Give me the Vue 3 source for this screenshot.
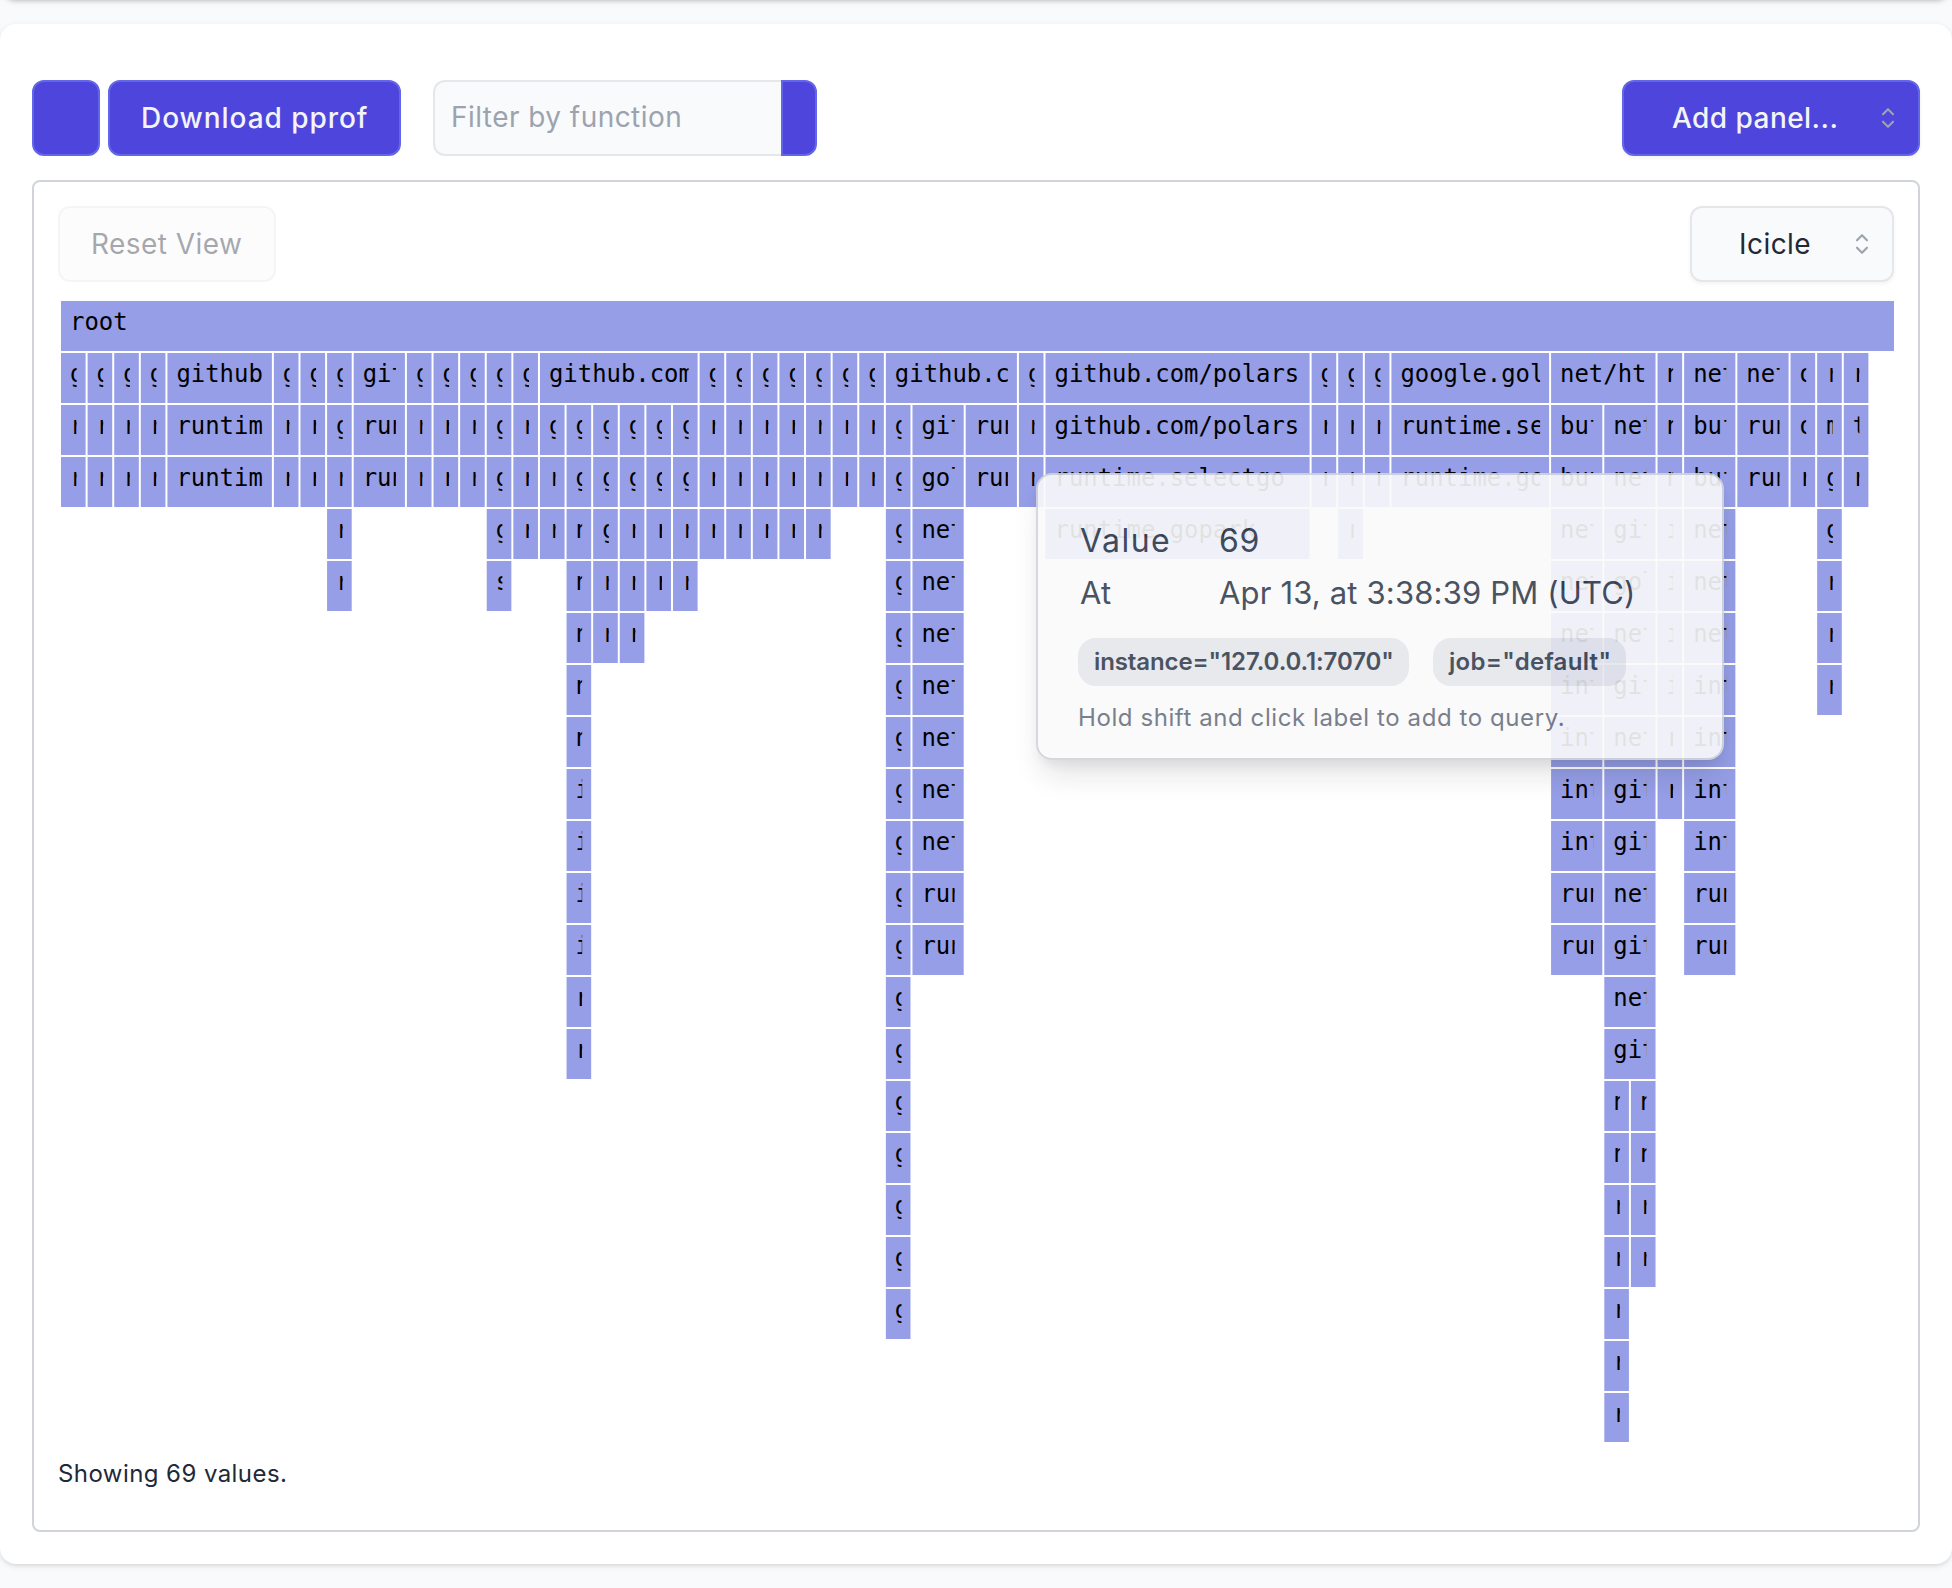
<script setup>
const TOTAL = 69
const WIDTH = 1836
const ROW = 52
const UNIT = WIDTH / TOTAL

// Stacks of the profile: [depth, first sample, samples, frames from top to bottom]
const stacks = [
  [0, 0, 69, 'root'],
  [1, 0, 1, 'g r r'],
  [1, 1, 1, 'g r r'],
  [1, 2, 1, 'g r r'],
  [1, 3, 1, 'g r r'],
  [1, 4, 4, 'github runtim runtim'],
  [1, 8, 1, 'g r r'],
  [1, 9, 1, 'g r r'],
  [1, 10, 1, 'g g r r r'],
  [1, 11, 2, 'git run run'],
  [1, 13, 1, 'g r r'],
  [1, 14, 1, 'g r r'],
  [1, 15, 1, 'g r r'],
  [1, 16, 1, 'g g g g s'],
  [1, 17, 1, 'g r r r'],
  [1, 18, 6, 'github.com'],
  [2, 18, 1, 'g r r'],
  [2, 19, 1, 'g g n n n n n i i i i r r'],
  [2, 20, 1, 'g g g r r'],
  [2, 21, 1, 'g g r r r'],
  [2, 22, 1, 'g g r r'],
  [2, 23, 1, 'g g r r'],
  [1, 24, 1, 'g r r r'],
  [1, 25, 1, 'g r r r'],
  [1, 26, 1, 'g r r r'],
  [1, 27, 1, 'g r r r'],
  [1, 28, 1, 'g r r r'],
  [1, 29, 1, 'g r r'],
  [1, 30, 1, 'g r r'],
  [1, 31, 5, 'github.c'],
  [2, 31, 1, 'g g g g g g g g g g g g g g g g g g'],
  [2, 32, 2, 'git gol net net net net net net net run run'],
  [2, 34, 2, 'run run'],
  [1, 36, 1, 'g r r'],
  [1, 37, 10, 'github.com/polars github.com/polars runtime.selectgo runtime.gopark'],
  [1, 47, 1, 'g r r'],
  [1, 48, 1, 'g r r r'],
  [1, 49, 1, 'g r r'],
  [1, 50, 6, 'google.gol runtime.se runtime.go'],
  [1, 56, 4, 'net/ht'],
  [2, 56, 2, 'buf buf net net net int int int int run run'],
  [2, 58, 2, 'net net git gol net git net git git net git net git'],
  [15, 58, 1, 'n n r r r r r'],
  [15, 59, 1, 'n n r r'],
  [1, 60, 1, 'n n n i i i i r r'],
  [1, 61, 2, 'net buf buf net net net int int int int run run'],
  [1, 63, 2, 'net run run'],
  [1, 65, 1, 'o o r'],
  [1, 66, 1, 'r m g g r r r'],
  [1, 67, 1, 'r t r'],
]

const frames = stacks.flatMap(([depth, start, span, names]) =>
  names.split(' ').map((name, i) => ({
    name,
    x: start * UNIT,
    y: (depth + i) * ROW,
    w: span * UNIT,
  })),
)
</script>

<template>
  <div class="page">
    <div class="query-bar"></div>
    <main class="card">
      <header class="toolbar">
        <button class="btn primary square" aria-label="Share"></button>
        <button class="btn primary download"><span>Download pprof</span></button>
        <div class="filter">
          <input type="text" placeholder="Filter by function" />
          <button class="btn primary search" aria-label="Search"></button>
        </div>
        <button class="btn primary select add">
          <span>Add panel...</span>
          <svg class="selector" viewBox="0 0 24 24"><path d="M8 9l4-4 4 4m0 6l-4 4-4-4" /></svg>
        </button>
      </header>

      <section class="panel">
        <div class="panel-bar">
          <button class="btn neutral reset" disabled><span>Reset View</span></button>
          <button class="btn neutral select kind">
            <span>Icicle</span>
            <svg class="selector" viewBox="0 0 24 24"><path d="M8 9l4-4 4 4m0 6l-4 4-4-4" /></svg>
          </button>
        </div>

        <svg class="icicle" :width="WIDTH - 2" :height="22 * ROW - 2">
          <g v-for="(f, i) in frames" :key="i">
            <rect :x="f.x + 1" :y="f.y + 1" :width="f.w - 2" :height="ROW - 2" />
            <svg :x="f.x + 10" :y="f.y" :width="f.w - 20" :height="ROW">
              <text x="0" y="30">{{ f.name }}</text>
            </svg>
          </g>
        </svg>

        <p class="summary">Showing 69 values.</p>
      </section>
    </main>

    <aside class="tooltip">
      <dl>
        <dt class="t-value">Value</dt>
        <dd class="t-count">69</dd>
        <dt>At</dt>
        <dd>Apr 13, at 3:38:39 PM (UTC)</dd>
      </dl>
      <div class="labels">
        <span class="label instance">instance="127.0.0.1:7070"</span>
        <span class="label job">job="default"</span>
      </div>
      <p class="hint">Hold shift and click label to add to query.</p>
    </aside>
  </div>
</template>

<style>
body {
  margin: 0;
  background: #f9fafb;
}
</style>

<style scoped>
* {
  box-sizing: border-box;
}
.page {
  position: relative;
  height: 1588px;
  overflow: hidden;
  background: #f9fafc;
  font-family: Inter, 'Open Sans', sans-serif;
  color: #1f2937;
}
.query-bar {
  height: 40px;
  margin-top: -40px;
  border-radius: 16px;
  background: #fff;
  box-shadow: 0 2px 6px rgba(0, 0, 0, 0.1), 0 2px 4px -2px rgba(0, 0, 0, 0.2);
}
.card {
  height: 1540px;
  margin-top: 24px;
  padding: 56px 32px 32px;
  border-radius: 16px;
  background: #fff;
  box-shadow: 0 2px 6px rgba(0, 0, 0, 0.1), 0 2px 4px -2px rgba(0, 0, 0, 0.1);
}
.toolbar {
  display: flex;
  height: 76px;
}
.btn {
  display: flex;
  align-items: center;
  height: 76px;
  padding: 0 0 1px;
  border: 2px solid;
  border-radius: 12px;
  font-family: inherit;
  font-size: 28px;
  letter-spacing: 0.45px;
  line-height: 40px;
  white-space: nowrap;
}
.primary {
  border-color: #6466ea;
  background: #4e45dc;
  color: #f3f4f6;
  font-weight: 500;
}
.neutral {
  border-color: #e5e7eb;
  background: #f9fafb;
  color: #1f2937;
}
.square {
  width: 68px;
}
.download {
  width: 293px;
  margin-left: 8px;
  padding-left: 31px;
  letter-spacing: 0.95px;
}
.filter {
  display: flex;
  margin-left: 32px;
}
.filter input {
  width: 348px;
  height: 76px;
  padding: 0 16px 2px;
  border: 2px solid #e5e7eb;
  border-right: 0;
  border-radius: 12px 0 0 12px;
  background: #f9fafc;
  font: 400 28px/40px Inter, sans-serif;
  letter-spacing: 0.45px;
}
.filter input::placeholder {
  color: #9ca3af;
  opacity: 1;
}
.search {
  width: 36px;
  border-radius: 0 12px 12px 0;
}
.select {
  justify-content: space-between;
  box-shadow: 0 2px 4px rgba(0, 0, 0, 0.05);
}
.add {
  width: 298px;
  margin-left: auto;
  padding: 0 15px 0 48px;
}
.selector {
  width: 30px;
  height: 30px;
  fill: none;
  stroke: #9ca3af;
  stroke-width: 1.7;
  stroke-linecap: round;
  stroke-linejoin: round;
}
.panel {
  height: 1352px;
  margin-top: 24px;
  padding: 24px;
  border: 2px solid #d1d5db;
  border-radius: 8px;
}
.panel-bar {
  display: flex;
  justify-content: space-between;
}
.reset {
  width: 218px;
  padding-left: 31px;
  opacity: 0.4;
}
.kind {
  width: 204px;
  padding: 0 15px 0 47px;
}
.icicle {
  display: block;
  margin: 18px 0 0 2px;
}
.icicle rect {
  fill: #959ee6;
}
.icicle text {
  font: 23.92px 'DejaVu Sans Mono', monospace;
}
.summary {
  margin: 14px 0 0;
  font-size: 24px;
  letter-spacing: 0.43px;
  line-height: 36px;
}
.tooltip {
  position: absolute;
  top: 473px;
  left: 1036px;
  width: 688px;
  height: 287px;
  padding: 40px 40px 0;
  border: 2px solid #d1d5db;
  border-radius: 16px;
  background: #fafafa;
  color: #374151;
  opacity: 0.9;
  box-shadow: 0 20px 30px -6px rgba(0, 0, 0, 0.12), 0 8px 12px -4px rgba(0, 0, 0, 0.08);
}
dl {
  display: grid;
  grid-template-columns: 139px 1fr;
  margin: 0 0 0 2px;
  font-size: 31px;
  letter-spacing: 0.16px;
  line-height: 52px;
  white-space: nowrap;
}
dd {
  margin: 0;
}
.t-value {
  font-size: 32px;
  letter-spacing: 1.5px;
}
.t-count {
  font-size: 32px;
  letter-spacing: 0.6px;
}
.labels {
  display: flex;
  gap: 24px;
  margin-top: 19px;
}
.label {
  height: 48px;
  padding: 0 16px;
  border-radius: 18px;
  background: #e5e7eb;
  font-size: 24px;
  font-weight: 600;
  line-height: 47px;
  white-space: nowrap;
}
.instance {
  width: 331px;
  letter-spacing: -0.1px;
}
.job {
  width: 193px;
  letter-spacing: 0.3px;
}
.hint {
  margin: 14px 0 0;
  color: #6b7280;
  font-size: 24px;
  letter-spacing: 0.58px;
  line-height: 36px;
  white-space: nowrap;
}
</style>
